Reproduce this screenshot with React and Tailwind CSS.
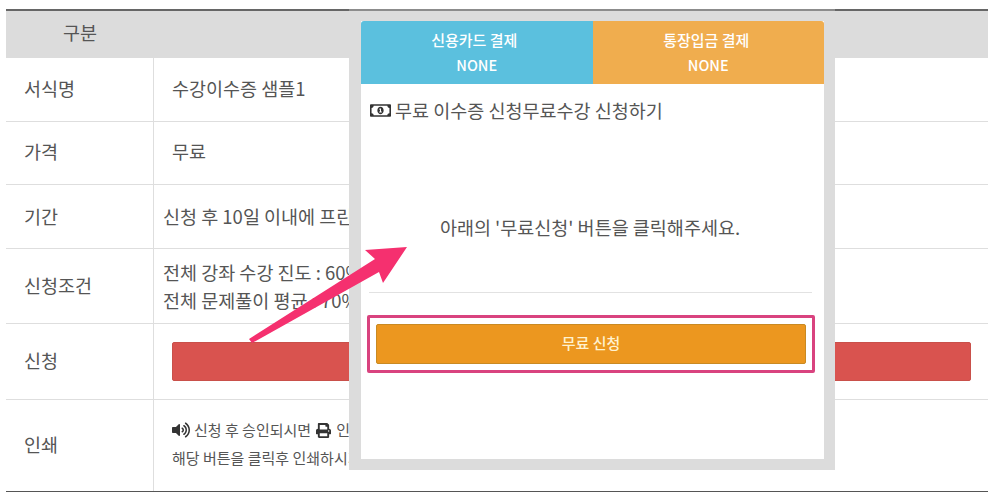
import React from "react";
import { FaVolumeUp, FaPrint, FaRegMoneyBillAlt } from "react-icons/fa";

const font = "font-['Noto_Sans_CJK_KR','Noto_Sans',sans-serif]";

const Row = ({ label, height, labelPad = "pb-[2px]", children, last }) => (
  <div
    className={`grid grid-cols-[148px_1fr] ${height} border-b ${
      last ? "border-[#555]" : "border-[#dedede]"
    }`}
  >
    <div className={`flex items-center border-r border-[#dedede] ${labelPad} pl-[18px] text-[18.5px] text-[#555]`}>
      {label}
    </div>
    {children}
  </div>
);

export default function App() {
  return (
    <div className={`relative h-[501px] w-[997px] overflow-hidden bg-white ${font}`}>
      {/* table underneath */}
      <div className="pl-[6px] pr-[9px] pt-[9px]">
        <div className="border-t-2 border-[#666]">
          <div className="flex h-[47px] items-center bg-[#dcdcdc] pb-[3px] pl-[57px] text-[18.5px] text-[#555]">
            구분
          </div>
          <Row label="서식명" height="h-[64px]">
            <div className="flex items-center pb-[2px] pl-[18px] text-[18.5px] text-[#555]">수강이수증 샘플1</div>
          </Row>
          <Row label="가격" height="h-[63px]">
            <div className="flex items-center pb-[2px] pl-[18px] text-[18.5px] text-[#555]">무료</div>
          </Row>
          <Row label="기간" height="h-[64px]" labelPad="pb-0">
            <div className="flex items-center pl-[9px] text-[18.5px] whitespace-nowrap text-[#555]">신청 후 10일 이내에 프린트</div>
          </Row>
          <Row label="신청조건" height="h-[75px]" labelPad="pb-0">
            <div className="flex flex-col justify-center pl-[9px] text-[18.5px] leading-[28px] whitespace-nowrap text-[#555]">
              <span>전체 강좌 수강 진도 : 60%</span>
              <span>전체 문제풀이 평균 : 70%</span>
            </div>
          </Row>
          <Row label="신청" height="h-[76px]">
            <div className="flex items-center pl-[18px] pr-[17px]">
              <div className="h-[39px] w-full rounded-[2px] border border-[#c9504a] bg-[#d9534f]" />
            </div>
          </Row>
          <Row label="인쇄" height="h-[92px]" last>
            <div className="flex flex-col justify-center gap-[8px] pb-[3px] pl-[18px] text-[15px] leading-[20px] whitespace-nowrap text-[#555]">
              <div className="flex items-center">
                <FaVolumeUp size={18} className="mr-[4px] text-[#333]" />
                <span>신청 후 승인되시면</span>
                <FaPrint size={15} className="mx-[5px] text-[#333]" />
                <span>인쇄</span>
              </div>
              <div>해당 버튼을 클릭후 인쇄하시기</div>
            </div>
          </Row>
        </div>
      </div>

      {/* payment modal over the table */}
      <div className="absolute left-[349px] top-[9px] h-[461px] w-[486px] border-t-2 border-[#8c8c8c] bg-[#dcdcdc] pl-[12px] pr-[11px] pt-[10px] pb-[11px]">
        <div className="flex h-full flex-col bg-white">
          <div className="flex h-[63px] text-[15px] font-medium text-white">
            <div className="flex w-1/2 flex-col items-center justify-center gap-[3px] rounded-tl-[3px] bg-[#5bc0de] pb-[1px] leading-[22px]">
              <span className="pr-[5px]">신용카드 결제</span>
              <span className="text-[14.5px]">NONE</span>
            </div>
            <div className="flex w-1/2 flex-col items-center justify-center gap-[3px] rounded-tr-[3px] bg-[#f0ad4e] pb-[1px] leading-[22px]">
              <span className="pr-[4px]">통장입금 결제</span>
              <span className="text-[14.5px]">NONE</span>
            </div>
          </div>
          <div className="mt-[14px] flex items-center pl-[9px] text-[18.5px] leading-[24px] text-[#555]">
            <FaRegMoneyBillAlt size={21} className="mr-[4px] shrink-0 text-[#333]" />
            무료 이수증 신청무료수강 신청하기
          </div>
          <div className="mt-[93px] pr-[5px] text-center text-[18.5px] leading-[24px] text-[#555]">
            아래의 '무료신청' 버튼을 클릭해주세요.
          </div>
          <div className="ml-[8px] mr-[12px] mt-[53px] border-t border-[#e2e2e2]" />
          <div className="ml-[6px] mr-[9px] mt-[22px] rounded-[2px] border-[3px] border-[#d9437f] p-[6px]">
            <div className="flex h-[40px] items-center justify-center rounded-[2px] border border-[#c98a22] bg-[#ec971f] pb-[2px] text-[15px] font-medium text-[#fff2cf]">
              무료 신청
            </div>
          </div>
        </div>
      </div>

      {/* annotation arrow */}
      <svg className="absolute left-0 top-0" width="997" height="501" viewBox="0 0 997 501">
        <polygon points="249,339 375,259 365,250 407,247 383,283 379,272 252,343" fill="#f5306f" />
      </svg>
    </div>
  );
}
